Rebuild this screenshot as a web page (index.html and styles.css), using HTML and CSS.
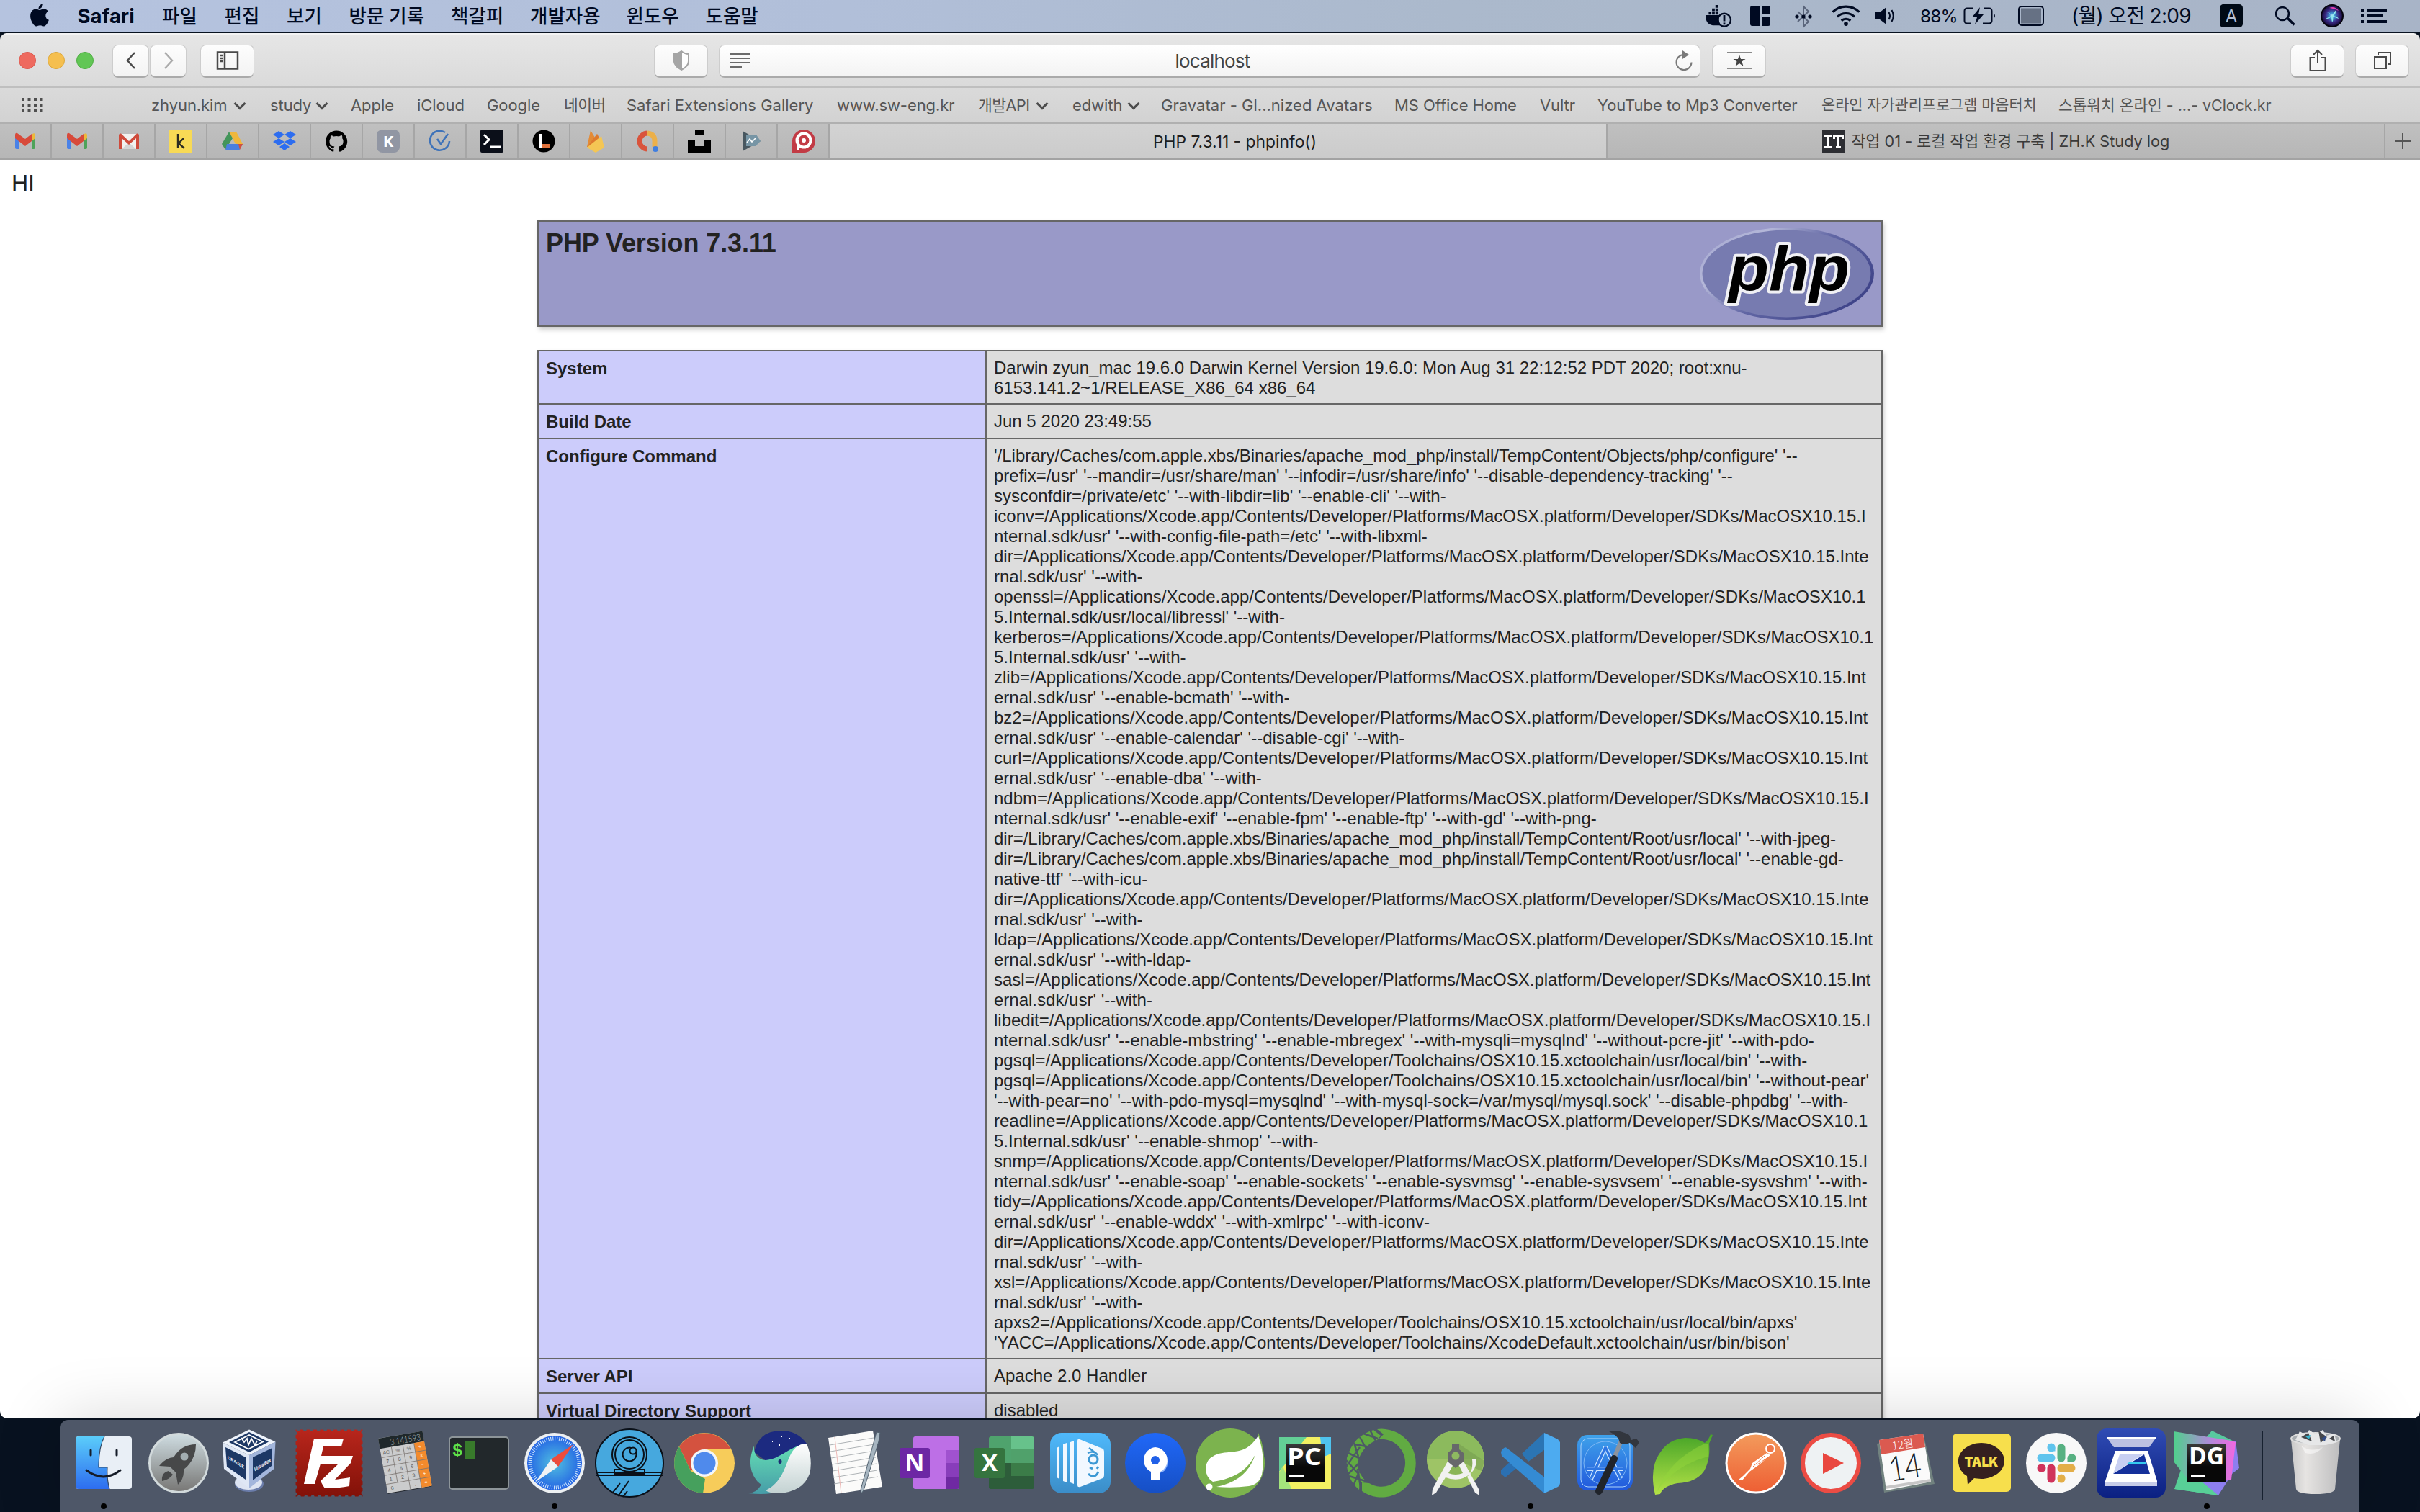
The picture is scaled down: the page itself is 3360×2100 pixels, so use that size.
FILE: index.html
```html
<!DOCTYPE html>
<html lang="ko">
<head>
<meta charset="utf-8">
<title>PHP 7.3.11 - phpinfo()</title>
<link rel="stylesheet" href="styles.css">
</head>
<body>
<header class="menubar">
  <nav class="menus">
    <svg class="apple" viewBox="0 0 28 34"><path d="M19 0c.5 3.500-3 8-6.500 8C12 4.500 15.500.600 19 0zM14 9.500c1.500 0 3.300-1.600 6.300-1.600 2.500 0 4.900 1.300 6.300 3.400-5.600 3.300-4.600 10.900 1.100 13-1.200 3.700-4.300 9.200-7.500 9.200-2 0-3-1.300-5.500-1.300s-3.700 1.300-5.500 1.300C5.500 33.500.300 25 .300 18.300.300 11.800 4.300 8 8.300 8c2.500 0 4.300 1.500 5.700 1.500z"/></svg>
    <b class="m-app">Safari</b><span class="m2">파일</span><span class="m2">편집</span><span class="m2">보기</span><span class="m4">방문 기록</span><span class="m3">책갈피</span><span class="m5">개발자용</span><span class="m3">윈도우</span><span class="m3">도움말</span>
  </nav>
  <div class="status">
    <svg class="s-docker" viewBox="0 0 40 34"><path d="M1 15h21c-3 4-2 11 1 15H11C3 29 0 23 1 15z"/><path d="M5 10h4v4H5zM10 10h4v4h-4zM15 10h4v4h-4zM10 5h4v4h-4zM15 5h4v4h-4zM15 0h4v4h-4z"/><circle cx="28" cy="22" r="9.500" fill="none" stroke="#000a22" stroke-width="2.500"/><path d="M26.500 15h3v9h-3zM26.500 26h3v3h-3z"/></svg>
    <svg class="s-mag" viewBox="0 0 28 28"><path d="M3 0h10v28H3a3 3 0 0 1-3-3V3a3 3 0 0 1 3-3zM16 0h9a3 3 0 0 1 3 3v9H16zM16 15h12v10a3 3 0 0 1-3 3h-9z"/></svg>
    <svg class="s-bt" viewBox="0 0 24 32"><path d="M4 9l15 14-7 7V2l7 7L4 23" fill="none" stroke="#59647a" stroke-width="2"/><circle cx="3" cy="16" r="2.600"/><circle cx="12" cy="16" r="2.600"/><circle cx="21" cy="16" r="2.600"/></svg>
    <svg class="s-wifi" viewBox="0 0 42 30"><path d="M2 10a27 27 0 0 1 38 0M8.500 17a18 18 0 0 1 25 0M14.500 22.500a9.500 9.500 0 0 1 13 0" fill="none" stroke="#000a22" stroke-width="3.200"/><circle cx="21" cy="27" r="3"/></svg>
    <svg class="s-vol" viewBox="0 0 26 24"><path d="M0 7h6l9-7v24l-9-7H0z"/><path d="M18.500 7q3 5 0 10M22.500 4q4.500 8 0 16" fill="none" stroke="#000a22" stroke-width="2"/></svg>
    <span class="s-pct">88%</span>
    <svg class="s-bat" viewBox="0 0 46 24"><path d="M13 1.500H5a3.500 3.500 0 0 0-3.500 3.500v14A3.500 3.500 0 0 0 5 22.500h6M29 1.500h7a3.500 3.500 0 0 1 3.500 3.500v14a3.500 3.500 0 0 1-3.500 3.500h-9" fill="none" stroke="#000a22" stroke-width="2"/><path d="M42 8q4 4 0 8zM23 0L12 14h7l-3 10 12-14h-7z"/></svg>
    <svg class="s-pad" viewBox="0 0 36 28"><rect x="1" y="1" width="34" height="26" rx="4" fill="none" stroke="#000a22" stroke-width="2"/><rect x="4" y="3.500" width="28" height="21" fill="#667184"/></svg>
    <span class="s-clock">(월) 오전 2:09</span>
    <span class="s-input">A</span>
    <svg class="s-find" viewBox="0 0 30 28"><circle cx="11" cy="11" r="9" fill="none" stroke="#000a22" stroke-width="2.600"/><path d="M18 17l9.500 9.500" stroke="#000a22" stroke-width="3.400"/></svg>
    <svg class="s-siri" viewBox="0 0 32 32"><defs><radialGradient id="siri"><stop offset="0" stop-color="#d8f4ff"/><stop offset=".25" stop-color="#3c8fd0"/><stop offset=".6" stop-color="#3b2a86"/><stop offset="1" stop-color="#12082e"/></radialGradient></defs><circle cx="16" cy="16" r="15" fill="url(#siri)" stroke="#05040e" stroke-width="2"/><path d="M7 10q7 2 9 6 3-7 6-8-1 5-4 8 6 1 7 4-5-2-8-3 1 5-1 8-1-4-1-8-4 4-8 3 4-2 8-4-2-4-8-6z" fill="#8fe9ee"/><path d="M12 5q8-3 13 4-5-3-13-4z" fill="#e23fb4"/></svg>
    <svg class="s-list" viewBox="0 0 36 20"><path d="M0 0h4v4H0zM8 0h28v4H8zM0 8h4v4H0zM8 8h22v4H8zM0 16h4v4H0zM8 16h28v4H8z"/></svg>
  </div>
</header>

<main class="window">
  <div class="toolbar">
    <i class="light red"></i><i class="light yellow"></i><i class="light green"></i>
    <span class="btn back"><svg width="16" height="26" viewBox="0 0 16 26"><path d="M13 2L3 13l10 11" stroke="#4a4a4a"/></svg></span>
    <span class="btn fwd"><svg width="16" height="26" viewBox="0 0 16 26"><path d="M3 2l10 11L3 24" stroke="#ababab"/></svg></span>
    <span class="btn side"><svg width="32" height="26" viewBox="0 0 32 26"><path d="M2 1.500h28v23H2zM12 1.500v23M5 6h4M5 10h4M5 14h4" stroke="#4a4a4a"/></svg></span>
    <span class="btn shield"><svg width="24" height="28" viewBox="0 0 24 28"><path d="M12 1q5 4 10 4v10q0 7-10 12z" fill="#fff" stroke="#a5a5a5" stroke-width="2"/><path d="M12 0Q6 4 1 4v12q1 7 11 12z" fill="#a5a5a5" stroke="none"/></svg></span>
    <div class="address">
      <svg width="30" height="22" viewBox="0 0 30 22"><path d="M0 2h28M0 8h28M0 14h28M0 20h17" stroke="#6c6c6c" stroke-width="2"/></svg>
      <span>localhost</span>
      <svg width="26" height="28" viewBox="0 0 26 28"><path d="M14 6A10.500 10.500 0 1 0 24.500 16.500" stroke="#7a7a7a" stroke-width="2"/><path d="M12 0l9 6-9 6z" fill="#7a7a7a" stroke="none"/></svg>
    </div>
    <span class="btn star"><svg width="34" height="26" viewBox="0 0 34 26"><path d="M0 2h34M0 24h34" stroke="#8a8a8a" stroke-width="2"/><path d="M17 5l2 6h6.500l-5 3.500 2 6.500-5.500-4-5.500 4 2-6.500-5-3.500H15z" fill="#444" stroke="none"/></svg></span>
    <span class="btn share"><svg width="26" height="32" viewBox="0 0 26 32"><path d="M9 12H2.500v18h21V12H17M13 20V2M7 8l6-6 6 6" stroke="#4a4a4a" stroke-width="2"/></svg></span>
    <span class="btn tabs"><svg width="26" height="26" viewBox="0 0 26 26"><path d="M2 8h16v16H2z M7 6V2h17v16h-4" stroke="#4a4a4a" stroke-width="2"/></svg></span>
  </div>
  <nav class="bookmarks">
    <svg class="grid" width="30" height="20" viewBox="0 0 30 20"><path d="M0 2h30M0 10h30M0 18h30" stroke="#4f4f4f" stroke-width="4" stroke-dasharray="4 4.500"/></svg>
    <span class="more">zhyun.kim</span><span class="more">study</span><span>Apple</span><span>iCloud</span><span>Google</span><span>네이버</span><span>Safari Extensions Gallery</span><span>www.sw-eng.kr</span><span class="more">개발API</span><span class="more">edwith</span><span>Gravatar - Gl...nized Avatars</span><span>MS Office Home</span><span>Vultr</span><span>YouTube to Mp3 Converter</span><span>온라인 자가관리프로그램 마음터치</span><span>스톱워치 온라인 - ...- vClock.kr</span>
  </nav>
  <nav class="tabbar">
    <span class="pin"><svg viewBox="0 0 32 32"><path d="M2 8l5 4v15H4a2 2 0 0 1-2-2z" fill="#4a82e8"/><path d="M30 8l-5 4v15h3a2 2 0 0 0 2-2z" fill="#4fa35a"/><path d="M25 7l2-1.500q3-1 3 3V12l-5 4z" fill="#ecb93b"/><path d="M2 8q0-4 3-3l11 8 9-7v10l-9 7-9-7-5-4z" fill="#d84a3a"/></svg></span>
    <span class="pin"><svg viewBox="0 0 32 32"><path d="M2 8l5 4v15H4a2 2 0 0 1-2-2z" fill="#4a82e8"/><path d="M30 8l-5 4v15h3a2 2 0 0 0 2-2z" fill="#4fa35a"/><path d="M25 7l2-1.500q3-1 3 3V12l-5 4z" fill="#ecb93b"/><path d="M2 8q0-4 3-3l11 8 9-7v10l-9 7-9-7-5-4z" fill="#d84a3a"/></svg></span>
    <span class="pin"><svg viewBox="0 0 32 32"><path d="M3 6h26v21H3z" fill="#f2f1ef"/><path d="M6 27l10-9 10 9z" fill="#d5d5d5"/><path d="M2 8q0-3 3-2.500L16 16 27 5.500q3-.500 3 2.500v19h-4V12l-10 9-10-9v15H2z" fill="#cf4b3c"/></svg></span>
    <span class="pin"><svg viewBox="0 0 32 32"><path d="M0 0h32v32H0z" fill="#f8da55"/><path d="M12 6v20M20 12l-7 7 8 7" fill="none" stroke="#2b2b22" stroke-width="2.400"/></svg></span>
    <span class="pin"><svg viewBox="0 0 32 32"><path d="M11 3h10l9 17H20z" fill="#efb73c"/><path d="M11 3l5 9L6 28l-5-8z" fill="#43955a"/><path d="M8 20h22l-5 9H6z" fill="#4a7fe0"/><path d="M24 20h6l-4 8z" fill="#d3503d"/></svg></span>
    <span class="pin"><svg viewBox="0 0 32 32"><path d="M8 2l8 5-8 5-8-5zM24 2l8 5-8 5-8-5zM8 12l8 5-8 5-8-5zM24 12l8 5-8 5-8-5zM16 19l7 5-7 5-7-5z" fill="#2d6df0"/></svg></span>
    <span class="pin"><svg viewBox="0 0 32 32"><path d="M16 1.500a15 15 0 0 0-4.700 29.200c.700.100 1-.300 1-.700v-3c-4 1-5-1.500-5-1.500-1-2-1.700-2.300-1.700-2.300 1.500-.800 2.800 1.300 3.300 2 1 1.300 2.500 1 3.500.600q.200-1.500 1-2.200C9 23 6.500 21.500 6.500 16c0-1.500.600-3 1.600-4-.300-1-.500-2.500.200-4.100 1.500 0 3 .900 4 1.600a14 14 0 0 1 7.500 0c1-.700 2.500-1.600 4-1.600.700 1.600.500 3.100.200 4.100 1 1 1.600 2.500 1.600 4 0 5.500-3 7-6.700 7.500q1.100 1 1.100 3v3.500c0 .400.300.800 1 .700A15 15 0 0 0 16 1.500z" fill="#000"/></svg></span>
    <span class="pin"><svg viewBox="0 0 32 32"><rect width="32" height="32" rx="8" fill="#9196a3"/><text x="16" y="24" class="fav">K</text></svg></span>
    <span class="pin"><svg viewBox="0 0 32 32"><path d="M23 4a13.500 13.500 0 1 0 6 12M12 13l5 7L27 6" fill="none" stroke="#3f73b9" stroke-width="2.600"/></svg></span>
    <span class="pin"><svg viewBox="0 0 32 32"><rect width="32" height="32" rx="2" fill="#0b0f19"/><path d="M5 7l7 7-7 7M13 24h15" fill="none" stroke="#fff" stroke-width="3"/></svg></span>
    <span class="pin"><svg viewBox="0 0 32 32"><circle cx="16" cy="16" r="15.500" fill="#000"/><path d="M11 6v19" stroke="#fff" stroke-width="4"/><path d="M14 20h11v5H14z" fill="#e0703a"/></svg></span>
    <span class="pin"><svg viewBox="0 0 32 32"><path d="M4 24L9 1l6 10 3-5 9 18z" fill="#e38b37"/><path d="M4 24L18 6l3 6z" fill="#dd7a2e"/><path d="M4 25L24 9l4 16-12 7z" fill="#f4c654"/></svg></span>
    <span class="pin"><svg viewBox="0 0 32 32"><path d="M16 5a11 11 0 1 0 0 22" fill="none" stroke="#d9543c" stroke-width="7"/><path d="M16 5q10 1 10 11v8" fill="none" stroke="#ecb04a" stroke-width="7"/><circle cx="27" cy="27" r="4" fill="#3f7ee0"/></svg></span>
    <span class="pin"><svg viewBox="0 0 32 32"><path d="M10 0h12v8H10zM0 14h10v9h12v-9h10v18H0z" fill="#000"/></svg></span>
    <span class="pin"><svg viewBox="0 0 32 32"><path d="M4 2v28l25-14z" fill="#485760"/><path d="M9 7h14l6 9-7 7H9z" fill="#7795a5"/><path d="M10 18l4-5 3 4 6-6" fill="none" stroke="#fff" stroke-width="1.600"/></svg></span>
    <span class="pin"><svg viewBox="0 0 32 32"><circle cx="17" cy="16" r="16" fill="#c23b45"/><path d="M0 16V32h17z" fill="#c23b45"/><circle cx="17" cy="15" r="9.500" fill="none" stroke="#fff" stroke-width="4"/><circle cx="17" cy="15" r="3" fill="#fff"/><path d="M9 15v13" stroke="#fff" stroke-width="4"/></svg></span>
    <span class="tab active">PHP 7.3.11 - phpinfo()</span>
    <span class="tab other"><svg width="32" height="32" viewBox="0 0 32 32"><path d="M0 0h32v32H0z" fill="#2d2e33"/><path d="M3 7h11v3h-4v13h4v3H3v-3h3V10H3zM15 7h15v6h-3v-3h-3v13h2v3h-7v-3h2V10h-3v3h-3z" fill="#fff"/></svg><span>작업 01 - 로컬 작업 환경 구축 | ZH.K Study log</span></span>
    <span class="newtab"><svg width="22" height="22" viewBox="0 0 22 22"><path d="M11 0v22M0 11h22" stroke="#555" stroke-width="2"/></svg></span>
  </nav>

  <section class="page">
    <p class="hi">HI</p>
    <div class="banner">
      <h1>PHP Version 7.3.11</h1>
      <svg width="242" height="128" viewBox="0 0 242 128">
        <defs><linearGradient id="rim" x1="0" y1="0" x2="1" y2=".6"><stop offset="0" stop-color="#a3a6d0"/><stop offset=".3" stop-color="#b4b7d8"/><stop offset=".6" stop-color="#6166a4"/><stop offset="1" stop-color="#40458a"/></linearGradient></defs>
        <ellipse cx="121" cy="64" rx="121" ry="64" fill="url(#rim)"/><ellipse cx="120.500" cy="64" rx="117" ry="60.500" fill="#777bb0"/>
        <text class="phplogo" x="40" y="87" textLength="168" lengthAdjust="spacingAndGlyphs">php</text>
      </svg>
    </div>
    <table class="info">
      <tr><th>System</th><td>Darwin zyun_mac 19.6.0 Darwin Kernel Version 19.6.0: Mon Aug 31 22:12:52 PDT 2020; root:xnu-<br>6153.141.2~1/RELEASE_X86_64 x86_64</td></tr>
      <tr class="single"><th>Build Date</th><td>Jun 5 2020 23:49:55</td></tr>
      <tr><th>Configure Command</th><td>'/Library/Caches/com.apple.xbs/Binaries/apache_mod_php/install/TempContent/Objects/php/configure' '--<br>prefix=/usr' '--mandir=/usr/share/man' '--infodir=/usr/share/info' '--disable-dependency-tracking' '--<br>sysconfdir=/private/etc' '--with-libdir=lib' '--enable-cli' '--with-<br>iconv=/Applications/Xcode.app/Contents/Developer/Platforms/MacOSX.platform/Developer/SDKs/MacOSX10.15.I<br>nternal.sdk/usr' '--with-config-file-path=/etc' '--with-libxml-<br>dir=/Applications/Xcode.app/Contents/Developer/Platforms/MacOSX.platform/Developer/SDKs/MacOSX10.15.Inte<br>rnal.sdk/usr' '--with-<br>openssl=/Applications/Xcode.app/Contents/Developer/Platforms/MacOSX.platform/Developer/SDKs/MacOSX10.1<br>5.Internal.sdk/usr/local/libressl' '--with-<br>kerberos=/Applications/Xcode.app/Contents/Developer/Platforms/MacOSX.platform/Developer/SDKs/MacOSX10.1<br>5.Internal.sdk/usr' '--with-<br>zlib=/Applications/Xcode.app/Contents/Developer/Platforms/MacOSX.platform/Developer/SDKs/MacOSX10.15.Int<br>ernal.sdk/usr' '--enable-bcmath' '--with-<br>bz2=/Applications/Xcode.app/Contents/Developer/Platforms/MacOSX.platform/Developer/SDKs/MacOSX10.15.Int<br>ernal.sdk/usr' '--enable-calendar' '--disable-cgi' '--with-<br>curl=/Applications/Xcode.app/Contents/Developer/Platforms/MacOSX.platform/Developer/SDKs/MacOSX10.15.Int<br>ernal.sdk/usr' '--enable-dba' '--with-<br>ndbm=/Applications/Xcode.app/Contents/Developer/Platforms/MacOSX.platform/Developer/SDKs/MacOSX10.15.I<br>nternal.sdk/usr' '--enable-exif' '--enable-fpm' '--enable-ftp' '--with-gd' '--with-png-<br>dir=/Library/Caches/com.apple.xbs/Binaries/apache_mod_php/install/TempContent/Root/usr/local' '--with-jpeg-<br>dir=/Library/Caches/com.apple.xbs/Binaries/apache_mod_php/install/TempContent/Root/usr/local' '--enable-gd-<br>native-ttf' '--with-icu-<br>dir=/Applications/Xcode.app/Contents/Developer/Platforms/MacOSX.platform/Developer/SDKs/MacOSX10.15.Inte<br>rnal.sdk/usr' '--with-<br>ldap=/Applications/Xcode.app/Contents/Developer/Platforms/MacOSX.platform/Developer/SDKs/MacOSX10.15.Int<br>ernal.sdk/usr' '--with-ldap-<br>sasl=/Applications/Xcode.app/Contents/Developer/Platforms/MacOSX.platform/Developer/SDKs/MacOSX10.15.Int<br>ernal.sdk/usr' '--with-<br>libedit=/Applications/Xcode.app/Contents/Developer/Platforms/MacOSX.platform/Developer/SDKs/MacOSX10.15.I<br>nternal.sdk/usr' '--enable-mbstring' '--enable-mbregex' '--with-mysqli=mysqlnd' '--without-pcre-jit' '--with-pdo-<br>pgsql=/Applications/Xcode.app/Contents/Developer/Toolchains/OSX10.15.xctoolchain/usr/local/bin' '--with-<br>pgsql=/Applications/Xcode.app/Contents/Developer/Toolchains/OSX10.15.xctoolchain/usr/local/bin' '--without-pear'<br>'--with-pear=no' '--with-pdo-mysql=mysqlnd' '--with-mysql-sock=/var/mysql/mysql.sock' '--disable-phpdbg' '--with-<br>readline=/Applications/Xcode.app/Contents/Developer/Platforms/MacOSX.platform/Developer/SDKs/MacOSX10.1<br>5.Internal.sdk/usr' '--enable-shmop' '--with-<br>snmp=/Applications/Xcode.app/Contents/Developer/Platforms/MacOSX.platform/Developer/SDKs/MacOSX10.15.I<br>nternal.sdk/usr' '--enable-soap' '--enable-sockets' '--enable-sysvmsg' '--enable-sysvsem' '--enable-sysvshm' '--with-<br>tidy=/Applications/Xcode.app/Contents/Developer/Platforms/MacOSX.platform/Developer/SDKs/MacOSX10.15.Int<br>ernal.sdk/usr' '--enable-wddx' '--with-xmlrpc' '--with-iconv-<br>dir=/Applications/Xcode.app/Contents/Developer/Platforms/MacOSX.platform/Developer/SDKs/MacOSX10.15.Inte<br>rnal.sdk/usr' '--with-<br>xsl=/Applications/Xcode.app/Contents/Developer/Platforms/MacOSX.platform/Developer/SDKs/MacOSX10.15.Inte<br>rnal.sdk/usr' '--with-<br>apxs2=/Applications/Xcode.app/Contents/Developer/Toolchains/OSX10.15.xctoolchain/usr/local/bin/apxs'<br>'YACC=/Applications/Xcode.app/Contents/Developer/Toolchains/XcodeDefault.xctoolchain/usr/bin/bison'</td></tr>
      <tr class="single"><th>Server API</th><td>Apache 2.0 Handler</td></tr>
      <tr class="single"><th>Virtual Directory Support</th><td>disabled</td></tr>
    </table>
  </section>
</main>

<footer class="dock">
  <svg width="0" height="0" class="defs"><defs>
    <linearGradient id="gFinder" x2="0" y2="1"><stop stop-color="#5bcdfa"/><stop offset="1" stop-color="#2d6df0"/></linearGradient>
    <linearGradient id="gRocket" x2="0" y2="1"><stop stop-color="#cfdde2"/><stop offset="1" stop-color="#777674"/></linearGradient>
    <linearGradient id="gFz" x2="0" y2="1"><stop stop-color="#b8261c"/><stop offset="1" stop-color="#821108"/></linearGradient>
    <radialGradient id="gSafari"><stop stop-color="#50bfe0"/><stop offset="1" stop-color="#2464e4"/></radialGradient>
    <linearGradient id="gTeal" x2="0" y2="1"><stop stop-color="#65e0b4"/><stop offset="1" stop-color="#469ca8"/></linearGradient>
    <linearGradient id="gWhite" x2="0" y2="1"><stop stop-color="#ffffff"/><stop offset="1" stop-color="#c3d2d2"/></linearGradient>
    <linearGradient id="gSky" x2="0" y2="1"><stop stop-color="#4fb9fb"/><stop offset="1" stop-color="#3b8dc8"/></linearGradient>
    <linearGradient id="gSource" x2="0" y2="1"><stop stop-color="#2068f8"/><stop offset="1" stop-color="#164fc4"/></linearGradient>
    <linearGradient id="gXcode" x2="0" y2="1"><stop stop-color="#3fa2ea"/><stop offset="1" stop-color="#2158dc"/></linearGradient>
    <linearGradient id="gLeaf" x2="0" y2="1"><stop stop-color="#46a428"/><stop offset="1" stop-color="#b4e246"/></linearGradient>
    <linearGradient id="gPost" x2="0" y2="1"><stop stop-color="#f39b5c"/><stop offset="1" stop-color="#ee5e33"/></linearGradient>
    <linearGradient id="gScan" x2="0" y2="1"><stop stop-color="#304cb4"/><stop offset="1" stop-color="#0b2082"/></linearGradient>
    <linearGradient id="gDg" x2="1" y2="0"><stop stop-color="#4fd08c"/><stop offset=".6" stop-color="#b388dc"/><stop offset="1" stop-color="#f368e0"/></linearGradient>
    <linearGradient id="gBlack" x2="0" y2="1"><stop stop-color="#3a3a3a"/><stop offset=".6" stop-color="#080808"/></linearGradient>
    <linearGradient id="gBin" x2="1" y2="0"><stop stop-color="#c9c9c9"/><stop offset=".3" stop-color="#e6e4e2"/><stop offset="1" stop-color="#bdbdbe"/></linearGradient>
  </defs></svg>

  <span class="app run"><svg viewBox="0 0 96 96"><rect x="9" y="11" width="78" height="73" rx="4" fill="#e9eff6"/><path d="M49 11H13a4 4 0 0 0-4 4v65a4 4 0 0 0 4 4h43q-4-14-3-30H41q0-28 8-43z" fill="url(#gFinder)"/><path d="M49 11q-8 15-8 43h12q-1 16 3 30" fill="none" stroke="#344a66" stroke-width="1.200"/><path d="M30 30v7M66 30v7M24 58q24 18 47 0" fill="none" stroke="#151c28" stroke-width="3" stroke-linecap="round"/></svg></span>
  <span class="app"><svg viewBox="0 0 96 96"><circle cx="48" cy="48" r="40.500" fill="url(#gRocket)" stroke="#d2dadc" stroke-width="3"/><path d="M72 22q-20 0-31 18-10 0-20 12l15 1 8 8 3 17q9-8 8-21 17-13 17-35z" fill="#474849"/><circle cx="56" cy="39" r="5.500" fill="#a3aeb1"/><path d="M34 59q-10 2-9 14 10-2 15-9z" fill="#474849"/></svg></span>
  <span class="app"><svg viewBox="0 0 96 96"><ellipse cx="41" cy="77" rx="20" ry="11" fill="#6b7dab"/><ellipse cx="40" cy="75" rx="19" ry="10" fill="#dde4f2"/><path d="M41 1.500L77.500 18.500 41 37 4 19.500z" fill="#eef3fb"/><path d="M4 19.500L41 37v46L6 56z" fill="#dfe7f5"/><path d="M77.500 18.500L41 37v46l34.500-27z" fill="#a3b6dc"/><path d="M41 5l27 13.500L41 33 13 19zM8 26l28 14v31L10 53zM73 27L46 40v32l26-20z" fill="#1d3865"/><path d="M21 19l20-10 19 9.500-20 10zM30 13l4 6 4-5 2 9 4-9 5 9 3-6" fill="none" stroke="#fff" stroke-width="1.800"/><text class="tiny" transform="translate(11 42) skewY(31)" font-size="6" textLength="23" lengthAdjust="spacingAndGlyphs">ORACLE</text><text class="tiny" transform="translate(48 60) skewY(-31)" font-size="8" textLength="23" lengthAdjust="spacingAndGlyphs">VirtualBox</text></svg></span>
  <span class="app"><svg viewBox="0 0 96 96"><rect x="1.500" y="1.500" width="93" height="93" fill="url(#gFz)"/><rect x="1" y="1" width="94" height="94" fill="none" stroke="#4e5768" stroke-width="5" stroke-linecap="round" stroke-dasharray="0 9.400" stroke-dashoffset="-4"/><path d="M27 14h41l-3 11H40l-3 13h44l-3 10L56 71q8-1 21-3l-1 12q-14 3-34 3-3-4-6-10l25-24H36l-8 28H13z" fill="#fff"/></svg></span>
  <span class="app"><svg viewBox="0 0 96 96"><g transform="matrix(.961 -.164 .165 .95 12 14)"><rect y="1" width="64" height="80" rx="1" fill="#20242a"/><rect width="64" height="80" rx="1" fill="#cbcccd"/><path d="M0 0h64v15H0z" fill="#1f282b"/><path d="M49 15h15v65H49z" fill="#f28a2c"/><path d="M0 28h64M0 41h64M0 54h64M0 67h64M16.500 15v52M33 15v65M49 15v65" stroke="#7a7470" stroke-width=".8"/><text class="thin" x="16" y="12.500" font-size="13" fill="#b5bdbd" textLength="44" lengthAdjust="spacingAndGlyphs">3.141593</text><g class="keys"><text x="8" y="24">AC</text><text x="25" y="24">%</text><text x="41" y="24">%</text><text x="8" y="37">7</text><text x="25" y="37">8</text><text x="41" y="37">9</text><text x="8" y="50">4</text><text x="25" y="50">5</text><text x="41" y="50">6</text><text x="8" y="63">1</text><text x="25" y="63">2</text><text x="41" y="63">3</text><text x="8" y="76">0</text><text x="41" y="76">.</text></g><g class="keys ops"><text x="56.500" y="24">÷</text><text x="56.500" y="37">×</text><text x="56.500" y="50">−</text><text x="56.500" y="63">+</text><text x="56.500" y="76">=</text></g></g></svg></span>
  <span class="app"><svg viewBox="0 0 96 96"><rect x="7" y="12" width="82" height="72" rx="4" fill="#22282b" stroke="#8d9599" stroke-width="2"/><text class="mono" x="11" y="38" font-size="24" fill="#5fe24a">$</text><path d="M29 18h13v24H29z" fill="#387a2b"/></svg></span>
  <span class="app run"><svg viewBox="0 0 96 96"><circle cx="48" cy="48" r="42" fill="#edf0f2"/><circle cx="48" cy="48" r="38" fill="url(#gSafari)"/><circle cx="48" cy="48" r="34" fill="none" stroke="#d4eafc" stroke-width="5" stroke-dasharray="1 1.967"/><path d="M74 22L43 43l10 10z" fill="#ee4c3c"/><path d="M22 74l21-31 10 10z" fill="#f0f2f4"/></svg></span>
  <span class="app"><svg viewBox="0 0 96 96"><circle cx="48" cy="48" r="47" fill="#46a8de" stroke="#0a1018" stroke-width="2"/><path d="M4 61h88M2 65h92M27 57h42v6H27zM35 76L24 90M47 73L32 94M45 87l-6 8" fill="#46a8de" stroke="#0a1018" stroke-width="2"/><g fill="#46a8de" stroke="#0a1018" stroke-width="2"><circle cx="48" cy="36" r="24"/><circle cx="48" cy="36" r="20"/><circle cx="48" cy="36" r="9.500"/><circle cx="53" cy="31" r="4.500"/></g></svg></span>
  <span class="app"><svg viewBox="0 0 96 96"><circle cx="48" cy="48" r="42" fill="#f7cc5a"/><path d="M48 48L29 59 13 25A42 42 0 0 1 85 29H48z" fill="#d4523f"/><path d="M13 25l16 34 20 11-3 20A42 42 0 0 1 13 25z" fill="#46a05d"/><circle cx="48" cy="48" r="19" fill="#f4f6f8"/><circle cx="48" cy="48" r="15.500" fill="#4f8aec"/></svg></span>
  <span class="app"><svg viewBox="0 0 96 96"><path d="M48 3a42 43 0 0 1 37 18L48 50 30 46 12 33Q18 4 48 3z" fill="#1c2a80"/><path d="M85 21C62 24 48 43 28 44 16 43 11 34 12 24-1 55 14 73 22 78q-6 11-18 12 28 3 44-3z" fill="url(#gTeal)"/><path d="M85 21q9 22 4 42-9 25-43 27-13 0-18-4C65 68 52 22 85 21z" fill="url(#gWhite)"/><ellipse cx="48" cy="46" rx="2.500" ry="3" fill="#1b2b73"/><path d="M50 11h1M37 18h1M61 14h1M24 25h1M47 23h1M31 30h1" stroke="#fff" stroke-width="2"/></svg></span>
  <span class="app"><svg viewBox="0 0 96 96"><path d="M11 13l62-10 13 78-64 10z" fill="#fbfbfa"/><path d="M13 23l61-10M14 32l61-10M15 41l61-10M16 50l61-10M17 59l61-10M18 68l61-10M19 77l61-10" stroke="#aeb3b6" stroke-width="1"/><path d="M20 12l9 78" stroke="#edb8b5"/><path d="M78 5l5 1-2 12-21 68-3 4-1-5z" fill="#a6b5c0" stroke="#50606e" stroke-width="1"/></svg></span>
  <span class="app"><svg viewBox="0 0 96 96"><rect x="25" y="11" width="64" height="73" rx="3" fill="#bd6fe6"/><path d="M70 30h19v18H70z" fill="#a052cf"/><path d="M70 48h19v19H70z" fill="#883dbb"/><path d="M70 67h19v14a3 3 0 0 1-3 3H70z" fill="#6f29a2"/><rect x="6" y="27" width="42" height="42" rx="3" fill="#6d27a4"/><text class="off" x="27" y="59">N</text></svg></span>
  <span class="app"><svg viewBox="0 0 96 96"><rect x="26" y="11" width="63" height="73" rx="3" fill="#2d5d3a"/><path d="M29 11h28v37H26V14a3 3 0 0 1 3-3z" fill="#4fa36d"/><path d="M57 11h29a3 3 0 0 1 3 3v15H57z" fill="#67c28b"/><path d="M57 29h32v19H57z" fill="#50a16b"/><path d="M57 48h32v18H57z" fill="#3b7c48"/><rect x="6" y="27" width="42" height="42" rx="3" fill="#35743f"/><text class="off" x="27" y="59">X</text></svg></span>
  <span class="app"><svg viewBox="0 0 96 96"><rect x="6" y="6" width="84" height="84" rx="16" fill="url(#gSky)"/><path d="M15 27l4-2v45l-4-2zM24 22l5-2v55l-5-2zM34 19l5-2v60l-5-2zM44 17q0-3 3-2l32 13q2 1 2 4v33q0 3-2 4L48 81q-4 1-4-2z" fill="#f1f8ff"/><path d="M60 27l9 7M58 34q10-4 14 3" fill="none" stroke="#3c98d4" stroke-width="2.500"/><circle cx="66" cy="43" r="6" fill="none" stroke="#3c98d4" stroke-width="3"/><path d="M61 54l4 2M71 56l2-3M59 63q9 8 14-3" fill="none" stroke="#3c98d4" stroke-width="3"/></svg></span>
  <span class="app"><svg viewBox="0 0 96 96"><circle cx="48" cy="48" r="42" fill="url(#gSource)"/><path d="M66 44q-1 16-12 18V49z" fill="#8fb4fa"/><path d="M48 26a18 18 0 0 1 7 34l-1 12H42V60a18 18 0 0 1 6-34z" fill="#fff"/><circle cx="48" cy="44" r="6" fill="#2060e8"/></svg></span>
  <span class="app"><svg viewBox="0 0 96 96"><circle cx="48" cy="48" r="48" fill="#7cb34e"/><path d="M87 6q3 7 5 14 6 22 1 42l-6-20z" fill="#7cb34e"/><path d="M87 10q10 28 5 54-4 14-18 16-22 3-45 1 42-8 54-45-15 32-59 38-10-6-10-19Q15 40 32 35c22-5 38 2 55-25z" fill="#fff"/><circle cx="19" cy="81" r="4.500" fill="#fff"/></svg></span>
  <span class="app"><svg viewBox="0 0 96 96"><path d="M12 12h72v72H12z" fill="#63d096"/><path d="M50 12h19l6 25 9-2v49H27L12 60z" fill="#f3f062"/><path d="M12 62l5-10 12 32H12z" fill="#a4e57c"/><path d="M69 12h15v23l-12 5z" fill="#4fc3ee"/><path d="M21 21h54v54H21z" fill="url(#gBlack)"/><text class="jb" x="23" y="51" textLength="48" lengthAdjust="spacingAndGlyphs">PC</text><path d="M26 64h20v4H26z" fill="#fff"/></svg></span>
  <span class="app"><svg viewBox="0 0 96 96"><path d="M43 1a47.500 47.500 0 1 1-21 86V75l10 1A33 33 0 1 0 45 15l7-7z" fill="#61ab42"/><path d="M38 2Q10 10 1 41q-2 28 17 44l1-10 9-1Q11 56 18 41 25 23 43 16l5-6z" fill="#61ab42"/><path d="M33 2l9 17M24 7l20 7M19 12l9 16M11 22l18 3M11 20l6 19M3 34l17 8M19 26L0 53M0 44l18 20M18 48L2 64M4 66l26 8M18 60L9 82M16 56l5 32" stroke="#4d5867" stroke-width="2.500"/></svg></span>
  <span class="app"><svg viewBox="0 0 96 96"><circle cx="48" cy="43" r="40" fill="#9ec466"/><path d="M8 43a40 40 0 0 1 80 0z" fill="#8cba5d"/><path d="M52 21l36 24-4 14-36-16z" fill="#769f50" opacity=".6"/><path d="M71 43h6q0 20-22 27-11 2-21-2L21 89l-6 4 1-9 24-44h16l24 44 1 9-6-4-11-22q9-7 7-24z" fill="#f1f1f1"/><path d="M45 50l-7 12q10 4 20 0l-6-12z" fill="#8ab557"/><path d="M43 21h10v8l6 5v12l-11 9-11-9V34l6-5z" fill="#67686b"/><circle cx="48" cy="38" r="5.500" fill="#8eb960"/></svg></span>
  <span class="app run"><svg viewBox="0 0 96 96"><path d="M67 6L36 35l9 11 23-17z" fill="#2b75b4"/><path d="M13 68l-6-5V58l18-17 11 8z" fill="#2b70b2"/><path d="M7 33q0-3 3-5 3-3 5-1l54 42-2 21-59-52z" fill="#348bd3"/><path d="M67 6l19 9 3 4v57q0 3-3 5l-19 9z" fill="#4dabf0"/></svg></span>
  <span class="app"><svg viewBox="0 0 96 96"><rect x="9" y="9" width="77" height="77" rx="14" fill="url(#gXcode)"/><rect x="14" y="14" width="68" height="67" rx="10" fill="none" stroke="#acd4fa" stroke-width="1"/><circle cx="48" cy="48" r="30" fill="none" stroke="#80b9f5"/><path d="M28 70l20-44M48 26l21 44M22 56h51" fill="none" stroke="#cbe4ff" stroke-width="6"/><path d="M28 70l20-44M48 26l21 44M22 56h51" fill="none" stroke="#2e76e3" stroke-width="3.500"/><path d="M70 17L58 46" stroke="#8b939e" stroke-width="6"/><path d="M60 42L39 87" stroke="#20242b" stroke-width="10" stroke-linecap="round"/><path d="M53 4q14-3 28 5l3 7 7-2 4 5-5 8-8-7q-9 3-14 0-1-9-15-16z" fill="#32363e"/></svg></span>
  <span class="app"><svg viewBox="0 0 96 96"><path d="M89 8l3 1-5 12q2 22-7 38-11 16-37 17-20 4-24 15l-7 1Q3 54 20 32 31 15 54 13q16 0 27 7 6-5 8-12z" fill="url(#gLeaf)"/><path d="M81 21Q32 43 14 88 38 52 85 39q2-9 0-17z" fill="#94d53c" opacity=".5"/></svg></span>
  <span class="app"><svg viewBox="0 0 96 96"><circle cx="48" cy="48" r="41" fill="url(#gPost)" stroke="#fff" stroke-width="3"/><circle cx="68" cy="28" r="6" fill="#f07848" stroke="#fff" stroke-width="2"/><path d="M63 34L43 48l-3 8-10 10-6 5 5 1 10-12 14-10 15-13z" fill="#fff"/><path d="M60 38L44 53M65 40L50 50" stroke="#ef7745"/></svg></span>
  <span class="app"><svg viewBox="0 0 96 96"><circle cx="48" cy="48" r="42" fill="#eb4c44"/><circle cx="48" cy="48" r="36" fill="#eef2f3"/><path d="M37 34l29 14-29 15z" fill="#e9473f"/></svg></span>
  <span class="app"><svg viewBox="0 0 96 96"><path d="M7 21l65-11 15 67-70 12z" fill="#71827f"/><path d="M10 16L71 7l11 67-62 12z" fill="#fafafa"/><path d="M10 16L71 7l3 19-61 10z" fill="#db5a50"/><path d="M19 84l63-10v-4l-63 10z" fill="#c6c6c6"/><g transform="rotate(-9 48 48)"><text class="month" x="47" y="27">12월</text><text class="day" x="45" y="70" textLength="45" lengthAdjust="spacingAndGlyphs">14</text></g></svg></span>
  <span class="app"><svg viewBox="0 0 96 96"><rect x="8" y="7" width="81" height="81" rx="6" fill="#f7df4c"/><path d="M48 20c17 0 32 11 32 25S65 70 48 70c-4 0-8-1-10-1l-9 9-1-12q-12-7-12-21c0-14 15-25 32-25z" fill="#35201f"/><text class="talk" x="48" y="53" textLength="47" lengthAdjust="spacingAndGlyphs">TALK</text></svg></span>
  <span class="app"><svg viewBox="0 0 96 96"><circle cx="48" cy="48" r="42" fill="#f8f8f8"/><g stroke-width="11" stroke-linecap="round" fill="none"><path d="M41 27v-1M27 41h14" stroke="#60c4ed"/><path d="M55 27v14M70 41h-1" stroke="#57b182"/><path d="M41 55v15M27 55h1" stroke="#d0335b"/><path d="M55 55h14M55 70v-1" stroke="#e3ae48"/></g><path d="M41 31.500h5.500V26z" fill="#60c4ed"/><path d="M63.500 41v5.500H70z" fill="#57b182"/></svg></span>
  <span class="app"><svg viewBox="0 0 96 96"><rect width="96" height="96" rx="14" fill="url(#gScan)"/><path d="M15 12h67v3H15z" fill="#fff"/><path d="M16 15h65l-8 11H24z" fill="#bcc1e2"/><path d="M26 31h45l13 42v7H12v-7z" fill="#fff"/><path d="M12 74h72v6H12z" fill="#c7cce8"/><path d="M32 36h32L23 63z" fill="#c8cff2"/><path d="M66 36l8 27H23z" fill="#15309a"/><path d="M45 47h23l1 3H41z" fill="#35c9ef"/></svg></span>
  <span class="app run"><svg viewBox="0 0 96 96"><path d="M46 14l9-11 33 16-20 20z" fill="#58c99f"/><path d="M3 84l17-50h50l-6 59z" fill="#58cf97"/><path d="M88 17l5 38-10 8-19 30-49-41z" fill="#8d7ef0"/><path d="M3 84l14-20 47 29z" fill="#58cf97"/><path d="M2 4l80 13 6 2-6 52H22L2 46z" fill="url(#gDg)"/><path d="M21 21h54v54H21z" fill="url(#gBlack)"/><text class="jb" x="23" y="50" textLength="49" lengthAdjust="spacingAndGlyphs">DG</text><path d="M26 64h20v4H26z" fill="#fff"/></svg></span>
  <i class="divider"></i>
  <span class="app bin"><svg viewBox="0 0 96 96"><path d="M14 15q34 14 68 0l-7 69q-1 7-27 7t-27-7z" fill="url(#gBin)"/><ellipse cx="48" cy="14" rx="34" ry="8" fill="#a7acb0" stroke="#ddd" stroke-width="2"/><path d="M20 16l6-12 9 5 4-7 9 6 10-6 5 8 11-3 3 12-15 4H38z" fill="#e6e7e8"/><path d="M28 12l10-6 5 12zM52 3l12 9-9 8zM67 14l6-4 2 8z" fill="#46484c"/><path d="M34 11l7-2-2 6z" fill="#3ab7d0"/><path d="M56 14l7-4-2 8z" fill="#334d86"/><path d="M28 24q14 10 30 2-10 12-24 8z" fill="#fff" opacity=".5"/></svg></span>
</footer>
</body>
</html>
```
FILE: styles.css
```css
* { box-sizing: border-box; }
body {
  margin: 0;
  width: 3360px;
  height: 2100px;
  overflow: hidden;
  display: flex;
  flex-direction: column;
  background: #081220;
  font-family: Inter, "Noto Sans CJK KR", sans-serif;
  color: #222;
}
svg { display: block; flex: none; overflow: visible; }
span, b { white-space: nowrap; }

/* menu bar */
.menubar {
  height: 44px;
  flex: none;
  display: flex;
  align-items: center;
  justify-content: space-between;
  padding: 0 46px 0 41px;
  margin-bottom: 2px;
  background: linear-gradient(90deg, #b5c3df, #b1bfd9 35%, #abb9cc 60%, #a8b4c7);
  color: #000a22;
  fill: #000a22;
}
.menus, .status { display: flex; align-items: center; height: 44px; }
.menus { font-size: 26.500px; font-weight: 500; gap: 38.500px; line-height: 44px; }
.menus span { margin-top: -1px; }
.apple { width: 28px; height: 32px; margin-top: -3px; }
.m-app { font-size: 27.500px; font-weight: 700; width: 79px; letter-spacing: 0; }
.m2 { width: 48px; }
.m3 { width: 71.500px; }
.m4 { width: 103px; }
.m5 { width: 95px; }
.s-docker { width: 39px; height: 32px; margin-right: 24px; margin-top: 2px; }
.s-mag { width: 28px; height: 28px; margin-right: 34px; }
.s-bt { width: 24px; height: 32px; margin-right: 26px; margin-top: 2px; }
.s-wifi { width: 42px; height: 29px; margin-right: 20px; margin-top: -2px; }
.s-vol { width: 26px; height: 24px; margin-right: 36px; }
.s-pct { width: 50px; margin-right: 10px; font-size: 24.500px; letter-spacing: -.9px; }
.s-bat { width: 46px; height: 24px; margin-right: 30px; }
.s-pad { width: 36px; height: 28px; margin-right: 38px; }
.s-clock { width: 167px; margin-right: 39px; font-size: 28px; letter-spacing: -.7px; line-height: 40px; margin-top: -1px; }
.s-input { width: 32px; height: 32px; margin-right: 44px; border-radius: 5px; background: #000a16; color: #b3bfd2; font-size: 24px; line-height: 33px; text-align: center; }
.s-find { width: 30px; height: 28px; margin-right: 34px; }
.s-siri { width: 32px; height: 32px; margin-right: 24px; }
.s-list { width: 36px; height: 20px; }

/* browser window */
.window {
  height: 1924px;
  flex: none;
  display: flex;
  flex-direction: column;
  border-radius: 10px;
  overflow: hidden;
  background: #fff;
}
.toolbar {
  height: 76px;
  flex: none;
  display: flex;
  align-items: center;
  padding: 0 15px 0 26px;
  border-bottom: 2px solid #bfbfbf;
  border-top: 2px solid #f3f3f3;
  background: linear-gradient(#e6e6e6, #dadada);
}
.light { width: 24px; height: 24px; border-radius: 50%; margin-right: 16px; border: 1px solid; }
.red { background: #ee6a5f; border-color: #d9584e; }
.yellow { background: #f5bf4f; border-color: #dba73c; }
.green { background: #62c655; border-color: #4fae43; margin-right: 26px; }
.btn, .address {
  height: 46px;
  margin-top: 1px;
  border-radius: 8px;
  border: 1px solid #cdcdcd;
  border-bottom: 2px solid #aaa;
  background: linear-gradient(#fdfdfd, #f3f3f3);
  display: flex;
  align-items: center;
  justify-content: center;
  fill: none;
  stroke-width: 2.500;
}
.back { width: 51px; margin-right: 1px; }
.fwd { width: 51px; margin-right: 19px; }
.side, .shield, .star, .share, .tabs { width: 75px; }
.side { margin-right: 555px; }
.shield { margin-right: 15px; }
.address { width: 1363px; margin-right: 16px; padding: 0 10px 0 14px; justify-content: space-between; font-size: 26px; letter-spacing: -.8px; color: #444; background: linear-gradient(#fff, #f3f3f3); }
.address span { padding-top: 1px; }
.share { margin-left: auto; margin-right: 15px; }

.bookmarks {
  height: 50px;
  flex: none;
  display: flex;
  align-items: center;
  padding-left: 30px;
  border-bottom: 2px solid #b0b0b0;
  background: linear-gradient(#dadada, #d2d2d2);
  color: #555;
  font-size: 22px;
  line-height: 46px;
  letter-spacing: -.08px;
}
.bookmarks span { margin-right: 31px; display: flex; align-items: center; justify-content: space-between; }
.bookmarks .grid { margin-right: 150px; }
.more::after { content: ""; width: 9px; height: 9px; margin: -5px 3px 0 0; border: solid #4c4c4c; border-width: 0 3px 3px 0; transform: rotate(45deg); }
.bookmarks :nth-child(2) { width: 132px; margin-right: 33px; }
.bookmarks :nth-child(3) { width: 81px; }
.bookmarks :nth-child(4) { width: 61px; }
.bookmarks :nth-child(5) { width: 66px; }
.bookmarks :nth-child(6) { width: 76px; }
.bookmarks :nth-child(7) { width: 56px; font-size: 21.500px; letter-spacing: -.5px; }
.bookmarks :nth-child(8) { width: 261px; letter-spacing: 0; }
.bookmarks :nth-child(9) { width: 163px; margin-right: 33px; }
.bookmarks :nth-child(10) { width: 98px; font-size: 21.500px; letter-spacing: -.5px; margin-right: 33px; }
.bookmarks :nth-child(11) { width: 94px; margin-right: 29px; }
.bookmarks :nth-child(12) { width: 293px; letter-spacing: .02px; }
.bookmarks :nth-child(13) { width: 171px; }
.bookmarks :nth-child(14) { width: 49px; }
.bookmarks :nth-child(15) { width: 280px; }
.bookmarks :nth-child(16) { width: 298px; font-size: 20.800px; letter-spacing: 0; }
.bookmarks :nth-child(17) { width: 297px; font-size: 21.400px; margin: 0; letter-spacing: 0; }

.tabbar {
  height: 50px;
  flex: none;
  display: flex;
  border-bottom: 2px solid #a3a3a3;
  background: linear-gradient(#c0c0c0, #b6b6b6);
  font-size: 22px;
}
.tabbar > span { display: flex; align-items: center; justify-content: center; border-right: 2px solid #a6a6a6; }
.pin { width: 72px; }
.pin svg { width: 32px; height: 32px; }
.fav { font: 700 22px "Open Sans", sans-serif; fill: #fff; text-anchor: middle; }
.tab { width: 1080px; letter-spacing: 0; }
.tabbar .active { background: linear-gradient(#d3d3d3, #cbcbcb); color: #1e1e1e; padding-left: 47px; font-size: 22.800px; }
.other { color: #3a3a3a; gap: 9px; font-size: 21.700px; line-height: 44px; }
.tabbar .newtab { width: 48px; border: 0; }

/* phpinfo page */
.page {
  flex: 1;
  padding: 20px 0 0;
  font-family: "Liberation Sans", Arial, sans-serif;
  display: flex;
  flex-direction: column;
  align-items: center;
}
.hi { align-self: flex-start; margin: -7px 0 33px 16px; font-size: 32px; line-height: 38px; }
.banner {
  width: 1868px;
  height: 148px;
  flex: none;
  display: flex;
  justify-content: space-between;
  padding: 8px 10px;
  border: 2px solid #666;
  background: #9999c8;
  box-shadow: 2px 4px 6px #ccc;
  margin-bottom: 32px;
}
.banner h1 { margin: 1px 0 0; font-size: 36px; line-height: 42px; letter-spacing: -.1px; }
.phplogo { font: italic 700 88px "Liberation Sans", sans-serif; fill: #000; stroke: #f0f0f4; stroke-width: 8px; paint-order: stroke; stroke-linejoin: round; }
.info {
  width: 1868px;
  flex: none;
  border-collapse: collapse;
  table-layout: fixed;
  box-shadow: 2px 4px 6px #ccc;
  font-size: 24px;
  line-height: 28px;
}
.info th, .info td { border: 2px solid #666; padding: 9px 10px 7px; vertical-align: top; text-align: left; white-space: nowrap; }
.info th { width: 622px; background: #ccccfb; padding-top: 10px; padding-bottom: 6px; }
.info .single td { padding-bottom: 9px; }
.info td { background: #ddd; }

/* dock */
.dock {
  position: relative;
  width: 3192px;
  height: 128px;
  flex: none;
  margin: 2px 0 0 84px;
  padding: 12px 8px 0;
  display: flex;
  border-radius: 10px 10px 0 0;
  background: #4e5768;
  box-shadow: 0 0 90px rgba(0, 0, 0, .17);
}
.defs { position: absolute; }
.app { width: 104.280px; height: 112px; flex: none; display: flex; flex-direction: column; align-items: center; justify-content: space-between; }
.app svg { width: 96px; height: 96px; }
.run::after { content: ""; width: 8px; height: 8px; border-radius: 50%; background: #000; }
.divider { width: 2px; height: 96px; margin: 4px 21px 0 24px; background: #172130; }
.tiny { font-family: "Liberation Sans", sans-serif; font-weight: 700; fill: #fff; }
.thin { font-family: Lato, sans-serif; font-weight: 300; }
.keys text { font: 7px "Liberation Sans", sans-serif; fill: #555; text-anchor: middle; }
.ops text { fill: #fff; }
.mono { font-family: "Liberation Mono", monospace; font-weight: 700; }
.off { font: 700 33px "Open Sans", sans-serif; fill: #fff; text-anchor: middle; }
.jb { font: 700 34px "Open Sans", sans-serif; fill: #fff; }
.month { font: 300 15px "Noto Sans CJK KR", sans-serif; fill: #fff; text-anchor: middle; }
.day { font: 300 48px Lato, sans-serif; fill: #222; text-anchor: middle; }
.talk { font: 900 19px Inter, sans-serif; fill: #f7df4c; text-anchor: middle; }
```
